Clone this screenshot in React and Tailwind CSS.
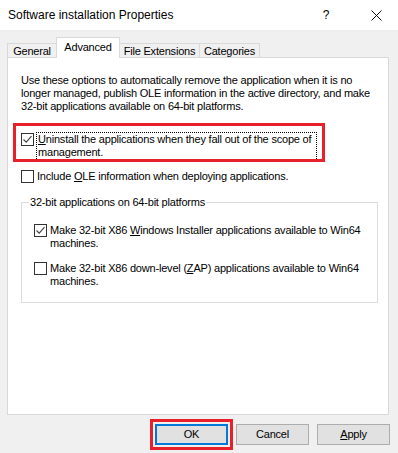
import React from "react";

const Check = ({ checked }) => (
  <span className="w-[13px] h-[13px] shrink-0 border border-[#333333] bg-white flex items-center justify-center">
    {checked && (
      <svg width="11" height="11" viewBox="0 0 11 11">
        <path d="M1.5 5.5 L4.2 8.2 L9.5 2.2" fill="none" stroke="#404040" strokeWidth="1.1" />
      </svg>
    )}
  </span>
);

const Tab = ({ label, active, width }) =>
  active ? (
    <div
      className={`${width} h-[21px] -ml-[1px] z-10 relative bg-white border border-b-0 border-[#d9d9d9] flex justify-center pt-[3px]`}
    >
      {label}
    </div>
  ) : (
    <div
      className={`${width} h-[15px] -ml-[1px] first:ml-0 bg-[#f0f0f0] border border-b-0 border-[#d9d9d9] flex items-center justify-center pt-[1px]`}
    >
      {label}
    </div>
  );

const Button = ({ children, focused }) => (
  <div className="relative">
    {focused && (
      <div className="absolute -inset-[5px] border-[3px] border-[#e8202a]" />
    )}
    <button
      className={`w-[73px] h-[21px] bg-[#e1e1e1] flex items-center justify-center ${
        focused ? "border-2 border-[#0078d7]" : "border border-[#adadad]"
      }`}
    >
      {children}
    </button>
  </div>
);

export default function App() {
  return (
    <div className="w-[398px] h-[453px] bg-[#f0f0f0] text-[11px] tracking-[-0.2px] leading-[13px] text-black font-['Liberation_Sans',Arial,sans-serif] whitespace-nowrap flex flex-col overflow-hidden">
      {/* title bar */}
      <div className="h-[30px] bg-white flex items-center pl-[8px] shrink-0 text-[12px] tracking-normal">
        <span className="flex-1">Software installation Properties</span>
        <span className="w-[12px] text-center mr-[39px]">?</span>
        <svg width="11" height="11" viewBox="0 0 11 11" className="mr-[16px]">
          <path d="M0.5 0.5 L10.5 10.5 M10.5 0.5 L0.5 10.5" stroke="#111" strokeWidth="1" />
        </svg>
      </div>

      {/* tabs */}
      <div className="flex items-end pl-[7px] mt-[7px] h-[21px] -mb-[1px]">
        <Tab label="General" width="w-[50px]" />
        <Tab label="Advanced" width="w-[64px]" active />
        <Tab label="File Extensions" width="w-[81px]" />
        <Tab label="Categories" width="w-[61px]" />
      </div>

      {/* panel */}
      <div className="ml-[7px] w-[382px] h-[358px] bg-white border border-[#d9d9d9] px-[13px] pt-[16px] shrink-0">
        <p>
          Use these options to automatically remove the application when it is no
          <br />
          longer managed, publish OLE information in the active directory, and make
          <br />
          32-bit applications available on 64-bit platforms.
        </p>

        <div className="relative mt-[19px] flex items-start gap-[2px]">
          <div className="absolute -left-[8px] -top-[9px] w-[312px] h-[39px] border-[3px] border-[#e8202a]" />
          <span className="mt-[1px]">
            <Check checked />
          </span>
          <span className="border border-dotted border-black pl-[1px] pr-[4px] pb-[1px] w-[281px]">
            <span className="underline">U</span>ninstall the applications when they fall out of the scope of
            <br />
            management.
          </span>
        </div>

        <div className="mt-[9px] flex items-center gap-[3px]">
          <Check />
          <span>
            Include <span className="underline">O</span>LE information when deploying applications.
          </span>
        </div>

        <fieldset className="mt-[13px] border border-[#dcdcdc] w-[357px] h-[107px] pl-[12px] pt-[15px]">
          <legend className="-ml-[5px] px-[1px]">32-bit applications on 64-bit platforms</legend>
          <div className="flex items-start gap-[3px]">
            <span>
              <Check checked />
            </span>
            <span>
              Make 32-bit X86 <span className="underline">W</span>indows Installer applications available to Win64
              <br />
              machines.
            </span>
          </div>
          <div className="mt-[12px] flex items-start gap-[3px]">
            <span>
              <Check />
            </span>
            <span>
              Make 32-bit X86 down-level (<span className="underline">Z</span>AP) applications available to Win64
              <br />
              machines.
            </span>
          </div>
        </fieldset>
      </div>

      {/* buttons */}
      <div className="flex justify-end gap-[8px] pr-[8px] mt-[9px]">
        <Button focused>OK</Button>
        <Button>Cancel</Button>
        <Button>
          <span>
            <span className="underline">A</span>pply
          </span>
        </Button>
      </div>
    </div>
  );
}
